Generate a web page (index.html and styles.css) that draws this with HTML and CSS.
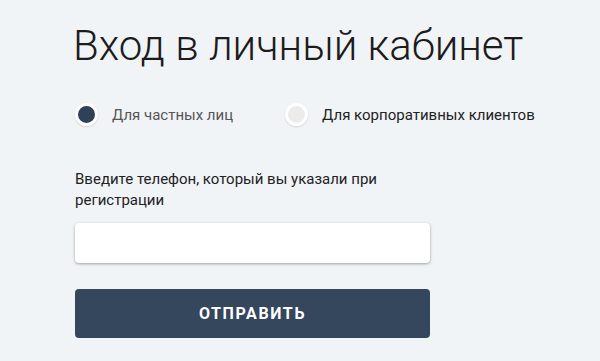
FILE: index.html
```html
<!DOCTYPE html>
<html lang="ru">
<head>
    <meta charset="UTF-8">
    <title>Вход в личный кабинет</title>
    <link rel="stylesheet" href="styles.css">
</head>
<body>
    <div class="login">
        <h1 class="login-title">Вход в личный кабинет</h1>

        <div class="account-type">
            <label class="radio">
                <span class="radio-dot checked"></span>
                <span class="radio-text muted">Для частных лиц</span>
            </label>
            <label class="radio">
                <span class="radio-dot"></span>
                <span class="radio-text">Для корпоративных клиентов</span>
            </label>
        </div>

        <form class="login-form">
            <p class="field-label">Введите телефон, который вы указали при регистрации</p>
            <input class="field-input" type="text">
            <button class="submit-btn" type="button">Отправить</button>
        </form>
    </div>
</body>
</html>
```

FILE: styles.css
```css
* {
    margin: 0;
    padding: 0;
    box-sizing: border-box;
    font-family: Roboto, 'Liberation Sans', sans-serif;
}

body {
    background-color: #f1f4f7;
    color: #222;
}

.login {
    width: 355px;
    margin-left: 75px;
    padding-top: 18px;
}

.login-title {
    font-size: 42px;
    font-weight: 300;
    color: #1c1c1c;
    white-space: nowrap;
    line-height: 56px;
    margin-left: -2px;
}

.account-type {
    display: flex;
    gap: 52px;
    margin-top: 29px;
    white-space: nowrap;
}

.radio {
    display: flex;
    align-items: center;
    gap: 14px;
}

.radio-dot {
    width: 23px;
    height: 23px;
    border-radius: 50%;
    background-color: #ebebeb;
    border: 3px solid #fff;
    box-shadow: 0 1px 2px rgba(0, 0, 0, 0.12);
}

.radio-dot.checked {
    background-color: #2f4157;
}

.radio-text {
    font-size: 15px;
    color: #222;
}

.radio-text.muted {
    color: #555;
}

.login-form {
    margin-top: 43px;
}

.field-label {
    font-size: 15px;
    line-height: 21px;
    color: #222;
}

.field-input {
    display: block;
    width: 100%;
    height: 40px;
    margin-top: 12px;
    border: none;
    border-radius: 4px;
    background-color: #fff;
    box-shadow: 0 1px 3px rgba(0, 0, 0, 0.35);
}

.submit-btn {
    display: block;
    width: 100%;
    height: 49px;
    margin-top: 26px;
    border: none;
    border-radius: 4px;
    background-color: #34475d;
    color: #fff;
    font-size: 16px;
    font-weight: 700;
    letter-spacing: 1.6px;
    text-transform: uppercase;
}
```
